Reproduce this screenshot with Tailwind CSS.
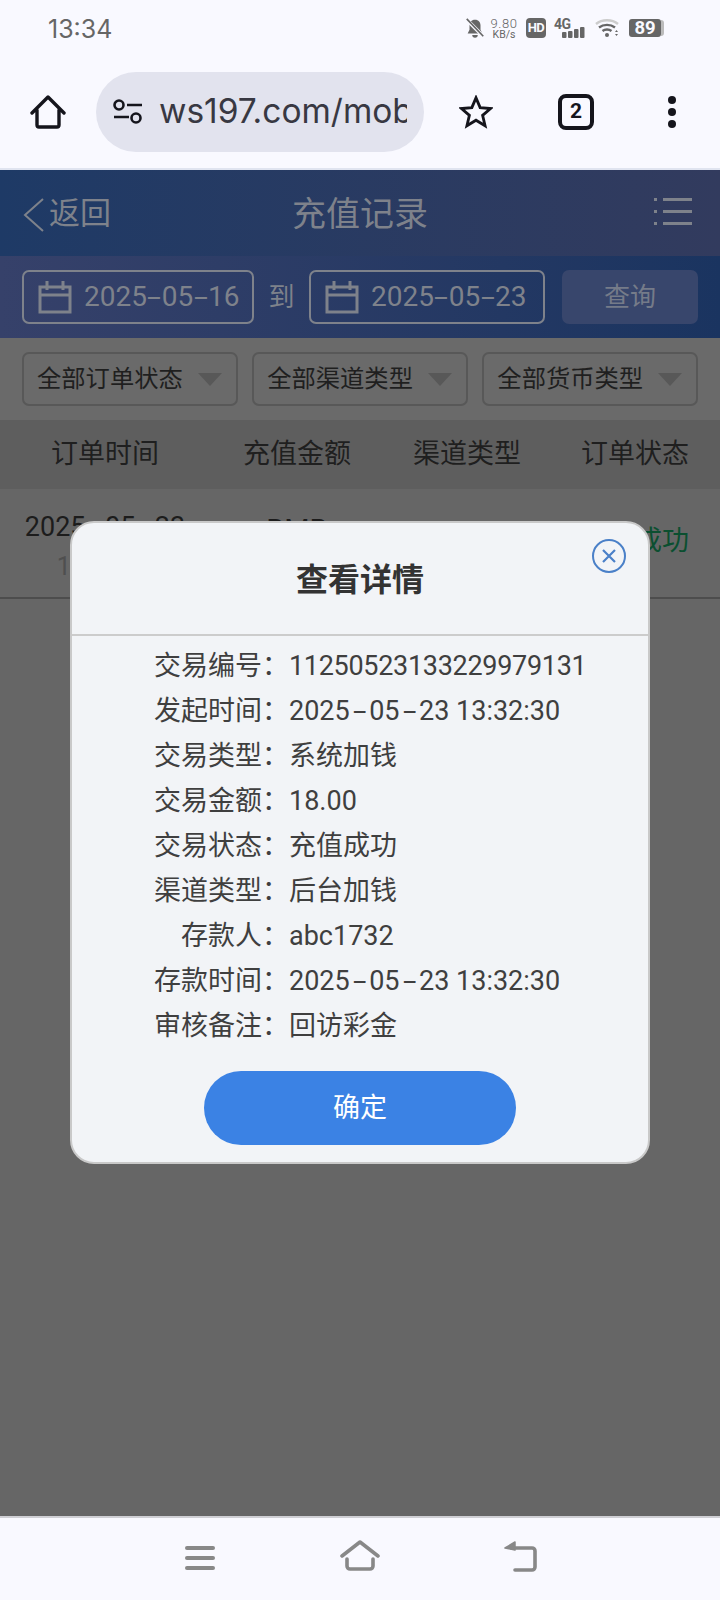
<!DOCTYPE html>
<html lang="zh-CN">
<head>
	<meta charset="UTF-8">
	<meta name="viewport" content="width=device-width, initial-scale=1.0">
	<title>充值记录</title>
	<script src="https://cdn.jsdelivr.net/npm/@tailwindcss/browser@4"></script>
</head>
<body class="bg-[#666666] font-['Roboto','Noto_Sans_CJK_SC',sans-serif]">
<div class="relative w-[720px] h-[1600px] overflow-hidden flex flex-col">

	<!-- phone status bar -->
	<div class="h-[57px] shrink-0 bg-[#f9f9ff] flex items-center pl-[48px] relative">
		<span class="text-[25px] text-[#666] mt-[2px] font-['Inter']">13:34</span>
		<div class="absolute left-[464px] top-[18px] flex items-center h-[20px]">
			<svg width="22" height="22" viewBox="0 0 22 24" class="mr-[4px]"><path d="M11 3c-4 0-6 3-6 6v5l-2 4h16l-2-4V9c0-3-2-6-6-6z" fill="#666"/><path d="M8 19.500a3 3 0 0 0 6 0z" fill="#666"/><path d="M2 3l18 18" stroke="#f9f9ff" stroke-width="4"/><path d="M2 2l18 19" stroke="#666" stroke-width="1.800"/></svg>
			<div class="w-[28px] flex flex-col items-center text-[#666] leading-none">
				<span class="text-[13px] leading-[12px] tracking-[0.6px] font-light">9.80</span>
				<span class="text-[10.500px] leading-[9px]">KB/s</span>
			</div>
			<span class="ml-[8px] w-[20px] h-[20px] rounded-[4px] bg-[#666] text-[#f9f9ff] text-[13px] tracking-[-0.5px] font-bold leading-[20px] text-center">HD</span>
			<div class="relative ml-[8px] w-[32px] h-[20px]">
				<span class="absolute left-0 -top-[1px] text-[14px] tracking-[-0.5px] font-bold text-[#666] leading-none">4G</span>
				<svg width="32" height="20" viewBox="0 0 32 20" class="absolute left-0 top-0"><rect x="8" y="14" width="4.500" height="6" rx="1" fill="#666"/><rect x="14" y="13" width="4.500" height="7" rx="1" fill="#666"/><rect x="20" y="11" width="4.500" height="9" rx="1" fill="#666"/><rect x="26" y="9" width="4.500" height="11" rx="1" fill="#666"/></svg>
			</div>
			<svg width="24" height="20" viewBox="0 0 24 20" class="ml-[9px]"><path d="M1 6c6-5 16-5 22 0" fill="none" stroke="#ccc" stroke-width="2.400"/><path d="M4 9.500c4.500-3.500 11.500-3.500 16 0" fill="none" stroke="#666" stroke-width="2.400"/><path d="M7.500 13c2.500-2 6.500-2 9 0" fill="none" stroke="#666" stroke-width="2.400"/><circle cx="12" cy="17" r="2" fill="#666"/><path d="M20 14l3 0-1.500-2zM20 16l3 0-1.500 2z" fill="#666"/></svg>
			<div class="ml-[10px] w-[32px] h-[18px] rounded-[3px] bg-[#666] text-[#f9f9ff] text-[18.500px] font-bold leading-[18px] text-center">89</div>
			<div class="w-[3px] h-[16px] bg-[#bbb] rounded-r-[3px]"></div>
		</div>
	</div>

	<!-- browser toolbar -->
	<div class="h-[113px] shrink-0 bg-[#f9f9ff] border-b-[2px] border-[#e0e4f0] pb-[2px] flex items-center relative">
		<svg width="36" height="36" viewBox="0 0 36 36" class="ml-[30px]"><path d="M2 19L18 3l16 16M7 16v15a2 2 0 0 0 2 2h18a2 2 0 0 0 2-2V16" fill="none" stroke="#15151c" stroke-width="3.400" stroke-linecap="round" stroke-linejoin="round"/></svg>
		<div class="ml-[30px] w-[328px] h-[80px] rounded-full bg-[#e2e3ee] flex items-center pl-[17px] pr-[16px]">
			<svg width="30" height="26" viewBox="0 0 30 26" class="shrink-0"><circle cx="6" cy="6" r="4.500" fill="none" stroke="#15151c" stroke-width="2.600"/><path d="M14 6h15M1 18h15" stroke="#15151c" stroke-width="2.600"/><circle cx="23" cy="19" r="4.500" fill="none" stroke="#15151c" stroke-width="2.600"/></svg>
			<span class="ml-[16px] w-[248px] overflow-hidden whitespace-nowrap text-[33.500px] text-[#383842] font-['Inter']">ws197.com/mobile</span>
		</div>
		<svg width="34" height="34" viewBox="0 0 36 36" class="ml-[35px]"><path d="M18 3l4.400 10.400 11 .9-8.400 7.200 2.600 11L18 26.700 8.400 32.500l2.600-11-8.400-7.200 11-.9z" fill="none" stroke="#15151c" stroke-width="3" stroke-linejoin="miter"/></svg>
		<div class="ml-[65px] w-[36px] h-[36px] rounded-[8px] border-[4px] border-[#15151c] flex items-center justify-center text-[21px] font-bold text-[#15151c] leading-none">2</div>
		<div class="ml-[74px] flex flex-col gap-[4px]">
			<div class="w-[8px] h-[8px] rounded-full bg-[#15151c]"></div>
			<div class="w-[8px] h-[8px] rounded-full bg-[#15151c]"></div>
			<div class="w-[8px] h-[8px] rounded-full bg-[#15151c]"></div>
		</div>
	</div>

	<!-- page, painted with the dimmed colours of the backdrop -->
	<div class="flex-1 flex flex-col bg-[#666666] min-h-0">
		<div class="h-[86px] shrink-0 flex items-center relative pt-[3px] bg-gradient-to-r from-[#1e3a66] to-[#323b5e]">
			<svg width="24" height="36" viewBox="0 0 24 36" class="ml-[23px]"><path d="M20 2L2 18l18 16" fill="none" stroke="#7e828b" stroke-width="2"/></svg>
			<span class="ml-[2px] text-[31px] text-[#7e828b]">返回</span>
			<span class="absolute left-0 right-0 text-center text-[34px] text-[#7e828b]">充值记录</span>
			<div class="absolute left-[654px] top-[28px] flex flex-col gap-[9px]">
				<div class="flex items-center gap-[6px]"><div class="w-[3px] h-[3px] bg-[#7e828b]"></div><div class="w-[29px] h-[3px] bg-[#7e828b]"></div></div>
				<div class="flex items-center gap-[6px]"><div class="w-[3px] h-[3px] bg-[#7e828b]"></div><div class="w-[29px] h-[3px] bg-[#7e828b]"></div></div>
				<div class="flex items-center gap-[6px]"><div class="w-[3px] h-[3px] bg-[#7e828b]"></div><div class="w-[29px] h-[3px] bg-[#7e828b]"></div></div>
			</div>
		</div>

		<div class="h-[82px] shrink-0 flex items-center px-[22px] bg-gradient-to-r from-[#36416a] to-[#1a3460]">
			<div class="w-[232px] h-[54px] rounded-[7px] border-[2px] border-[#7e828b] flex items-center pl-[14px]">
				<svg width="34" height="34" viewBox="0 0 34 34"><path d="M2 7h30v25H2zM2 15h30M9 1v9M25 1v9" fill="none" stroke="#7e828b" stroke-width="3"/></svg>
				<span class="ml-[12px] text-[28px] text-[#7e828b]">2025<span class="inline-block scale-x-[1.8] mx-[3.500px]">-</span>05<span class="inline-block scale-x-[1.8] mx-[3.500px]">-</span>16</span>
			</div>
			<span class="w-[55px] text-center text-[26px] text-[#7e828b]">到</span>
			<div class="w-[236px] h-[54px] rounded-[7px] border-[2px] border-[#7e828b] flex items-center pl-[14px]">
				<svg width="34" height="34" viewBox="0 0 34 34"><path d="M2 7h30v25H2zM2 15h30M9 1v9M25 1v9" fill="none" stroke="#7e828b" stroke-width="3"/></svg>
				<span class="ml-[12px] text-[28px] text-[#7e828b]">2025<span class="inline-block scale-x-[1.8] mx-[3.500px]">-</span>05<span class="inline-block scale-x-[1.8] mx-[3.500px]">-</span>23</span>
			</div>
			<div class="ml-[17px] w-[136px] h-[54px] rounded-[7px] bg-[#38466c] flex items-center justify-center text-[26px] text-[#757b89]">查询</div>
		</div>

		<div class="h-[82px] shrink-0 flex items-center gap-[14.500px] px-[22px] bg-[#6a6a6a]">
			<div class="flex-1 h-[54px] rounded-[7px] border-[2px] border-[#585858] flex items-center justify-between pl-[13px] pr-[14px] text-[24.300px] text-[#1f1f1f]">全部订单状态<div class="w-0 h-0 border-x-[12px] border-x-transparent border-t-[13px] border-t-[#585858]"></div></div>
			<div class="flex-1 h-[54px] rounded-[7px] border-[2px] border-[#585858] flex items-center justify-between pl-[13px] pr-[14px] text-[24.300px] text-[#1f1f1f]">全部渠道类型<div class="w-0 h-0 border-x-[12px] border-x-transparent border-t-[13px] border-t-[#585858]"></div></div>
			<div class="flex-1 h-[54px] rounded-[7px] border-[2px] border-[#585858] flex items-center justify-between pl-[13px] pr-[14px] text-[24.300px] text-[#1f1f1f]">全部货币类型<div class="w-0 h-0 border-x-[12px] border-x-transparent border-t-[13px] border-t-[#585858]"></div></div>
		</div>

		<div class="h-[69px] shrink-0 grid grid-cols-[210px_174px_166px_170px] items-center text-center text-[27px] text-[#1f1f1f] bg-[#5e5e5e]">
			<span>订单时间</span><span>充值金额</span><span>渠道类型</span><span>订单状态</span>
		</div>

		<div class="h-[110px] shrink-0 grid grid-cols-[210px_174px_166px_170px] items-center text-center border-b-[2px] border-[#4d4d4d]">
			<div class="flex flex-col gap-[6px] pt-[6px]"><span class="text-[27px] text-[#1c1c1c] leading-[36px]">2025<span class="inline-block scale-x-[1.8] mx-[6px]">-</span>05<span class="inline-block scale-x-[1.8] mx-[6px]">-</span>23</span><span class="text-[25px] text-[#4f4f4f] leading-[32px]">13:32:30</span></div>
			<div class="flex flex-col pt-[6px]"><span class="text-[29px] text-[#1c1c1c] leading-[36px]">RMB</span><span class="text-[25px] text-[#1c1c1c] leading-[32px]">18.00</span></div>
			<span class="text-[26px] text-[#1c1c1c]">后台加钱</span>
			<span class="text-[27px] text-[#0b4f30] -mt-[3px]">充值成功</span>
		</div>
	</div>

	<!-- bottom navigation -->
	<div class="h-[84px] shrink-0 bg-[#f9f9ff] border-t-[2px] border-[#cfcfd4] flex items-center relative">
		<div class="absolute left-[185px] top-[28px] flex flex-col gap-[6px]">
			<div class="w-[30px] h-[4px] rounded-full bg-[#888]"></div>
			<div class="w-[30px] h-[4px] rounded-full bg-[#888]"></div>
			<div class="w-[30px] h-[4px] rounded-full bg-[#888]"></div>
		</div>
		<svg width="40" height="32" viewBox="0 0 40 32" class="absolute left-[340px] top-[22px]"><path d="M2 16L20 2l18 14M7 19v7a3 3 0 0 0 3 3h20a3 3 0 0 0 3-3v-7" fill="none" stroke="#888" stroke-width="3.600" stroke-linecap="round" stroke-linejoin="round"/></svg>
		<svg width="34" height="32" viewBox="0 0 34 32" class="absolute left-[503px] top-[23px]"><path d="M12 1L2 7l10 2z" fill="#888" stroke="#888" stroke-width="1.500" stroke-linejoin="round"/><path d="M8 7h21a3 3 0 0 1 3 3v16a3 3 0 0 1-3 3H12" fill="none" stroke="#888" stroke-width="3.600" stroke-linecap="round"/></svg>
	</div>

	<!-- details dialog -->
	<div class="absolute left-[70px] top-[521px] w-[580px] h-[643px] rounded-[24px] border-[2px] border-[#c9c9c9] bg-[#f2f4f7] flex flex-col">
		<div class="h-[113px] shrink-0 flex items-center justify-center text-[32px] font-bold text-[#333] border-b-[2px] border-[#cccccc] pt-[2px]">查看详情</div>
		<svg width="36" height="36" viewBox="0 0 36 36" class="absolute left-[519px] top-[15px]"><circle cx="18" cy="18" r="16" fill="none" stroke="#4a80c8" stroke-width="2"/><path d="M12 12l12 12M24 12L12 24" stroke="#4a80c8" stroke-width="2.200"/></svg>
		<div class="pt-[8px] grid grid-cols-[217px_1fr] auto-rows-[45px] items-center text-[27px] text-[#3f3f3f] whitespace-nowrap">
			<span class="text-right">交易编号：</span><span class="tracking-[-0.3px]">11250523133229979131</span>
			<span class="text-right">发起时间：</span><span>2025<span class="inline-block scale-x-[1.8] mx-[6px]">-</span>05<span class="inline-block scale-x-[1.8] mx-[6px]">-</span>23 13:32:30</span>
			<span class="text-right">交易类型：</span><span>系统加钱</span>
			<span class="text-right">交易金额：</span><span>18.00</span>
			<span class="text-right">交易状态：</span><span>充值成功</span>
			<span class="text-right">渠道类型：</span><span>后台加钱</span>
			<span class="text-right">存款人：</span><span>abc1732</span>
			<span class="text-right">存款时间：</span><span>2025<span class="inline-block scale-x-[1.8] mx-[6px]">-</span>05<span class="inline-block scale-x-[1.8] mx-[6px]">-</span>23 13:32:30</span>
			<span class="text-right">审核备注：</span><span>回访彩金</span>
		</div>
		<button class="mt-[22px] mx-auto w-[312px] h-[74px] rounded-full bg-[#3b82e4] text-white text-[27px]">确定</button>
	</div>
</div>
</body>
</html>
